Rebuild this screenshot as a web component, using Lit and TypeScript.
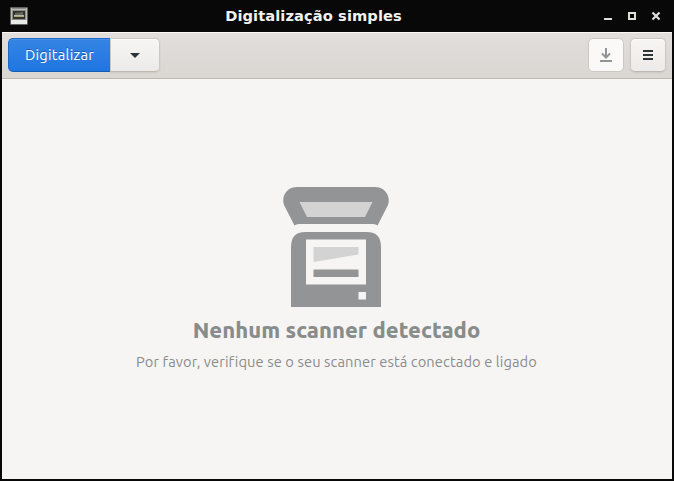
import { LitElement, html, css } from "lit";
import { customElement, property } from "lit/decorators.js";

@customElement("title-bar")
class TitleBar extends LitElement {
  @property() heading = "";

  static styles = css`
    :host {
      display: grid;
      grid-template-columns: 80px 1fr 80px;
      align-items: center;
      height: 32px;
      box-sizing: border-box;
      background: #080808;
      color: #f2f2f0;
    }
    .app-icon { display: block; margin-left: 10px; }
    .heading {
      padding-right: 47px;
      text-align: center;
      font: bold 14.67px/32px "DejaVu Sans", sans-serif;
      letter-spacing: 0.08px;
      white-space: nowrap;
    }
    .controls { display: block; margin-left: 6px; }
  `;

  render() {
    return html`
      <svg class="app-icon" width="18" height="18" viewBox="0 0 18 18">
        <rect x="0" y="0" width="18" height="18" rx="1" fill="#62625e" />
        <rect x="1" y="1" width="16" height="16" fill="#bcbcb9" />
        <rect x="2" y="1" width="14" height="1" fill="#8c8c88" />
        <rect x="2" y="3" width="14" height="10" fill="#8b8b87" />
        <path d="M3 4h12v8H3z" fill="#33332f" />
        <path d="M5 6L13 5V8H5z" fill="#66665f" />
        <rect x="4" y="8" width="10" height="1" fill="#b9b9a6" />
        <rect x="4" y="9" width="10" height="1" fill="#aaa46e" />
        <rect x="1" y="13" width="16" height="4" fill="#e9e9e7" />
      </svg>
      <div class="heading">${this.heading}</div>
      <svg class="controls" width="64" height="32" viewBox="0 0 64 32">
        <path d="M4 18h8v2H4z" fill="#deded9" />
        <path d="M29 13h6v6h-6z" fill="none" stroke="#deded9" stroke-width="2" />
        <path d="M52.5 12.5l7 7M59.5 12.5l-7 7" stroke="#deded9" stroke-width="2.2" />
      </svg>
    `;
  }
}

@customElement("header-bar")
class HeaderBar extends LitElement {
  static styles = css`
    :host {
      display: flex;
      justify-content: space-between;
      height: 47px;
      box-sizing: border-box;
      padding: 6px;
      border-bottom: 1px solid #bfb8b1;
      box-shadow: inset 0 1px #f9f8f7;
      background: linear-gradient(#e1dedb, #dad6d2);
    }
    .group { display: flex; }
    .tools { display: flex; gap: 6px; }
    button {
      display: flex;
      align-items: center;
      justify-content: center;
      box-sizing: border-box;
      height: 34px;
      margin: 0;
      padding: 0;
      border: 1px solid #cdc7c2;
      border-bottom-color: #bfb8b1;
      border-radius: 5px;
      background: linear-gradient(#f6f5f3, #edebe9);
      box-shadow: 0 1px 2px rgba(0, 0, 0, 0.07), inset 0 1px #fdfdfc;
    }
    svg { display: block; }
    .scan {
      width: 102px;
      border-color: #1b6acb;
      border-bottom-color: #185fb4;
      border-right: 0;
      border-radius: 5px 0 0 5px;
      background: linear-gradient(#3584e4, #1f76e1);
      box-shadow: inset 0 1px #4990e7;
      color: #fff;
      font: 14.67px/20px Ubuntu, "Noto Sans", sans-serif;
      letter-spacing: 0.25px;
      text-shadow: 0 -1px rgba(0, 0, 0, 0.3);
    }
    .more { width: 50px; border-left: 1px solid #cdc7c2; border-radius: 0 5px 5px 0; }
    .tool { width: 36px; }
    .tool.disabled { background: #faf9f8; box-shadow: none; border-bottom-color: #cdc7c2; }
  `;

  render() {
    return html`
      <div class="group">
        <button class="scan">Digitalizar</button>
        <button class="more" aria-label="Opções">
          <svg width="16" height="16" viewBox="0 0 16 16">
            <path d="M3 6h10L8 11z" fill="#2e3436" />
          </svg>
        </button>
      </div>
      <div class="tools">
        <button class="tool disabled" aria-label="Salvar">
          <svg width="16" height="16" viewBox="0 0 16 16">
            <path d="M8 1v9M4 6.500L8 10.500L12 6.500" fill="none" stroke="#929595" stroke-width="2" />
            <path d="M2 13h12v2H2z" fill="#929595" />
          </svg>
        </button>
        <button class="tool" aria-label="Menu">
          <svg width="16" height="16" viewBox="0 0 16 16">
            <path d="M3 3h10v2H3zM3 7h10v2H3zM3 11h10v2H3z" fill="#2e3436" />
          </svg>
        </button>
      </div>
    `;
  }
}

@customElement("empty-status")
class EmptyStatus extends LitElement {
  @property() heading = "";
  @property() detail = "";

  static styles = css`
    :host {
      display: flex;
      flex-direction: column;
      align-items: center;
      box-sizing: border-box;
      padding: 108px 2px 0 0;
      background: #f6f5f4;
      color: #888d8b;
      font-family: Ubuntu, "Noto Sans", sans-serif;
      font-variant-ligatures: none;
      white-space: nowrap;
    }
    .scanner { display: block; }
    .heading {
      margin: 8px 0 0 1px;
      font-size: 22px;
      font-weight: 800;
      line-height: 30px;
      letter-spacing: 0.04px;
    }
    .detail {
      margin: 7px 0 0 1px;
      font-size: 14.67px;
      line-height: 20px;
      letter-spacing: 0.1px;
    }
  `;

  render() {
    return html`
      <svg class="scanner" width="106" height="120" viewBox="0 0 106 120">
        <path
          d="M14 0H92C102 0 108 9 105 18L94.500 38.500Q93 37 90 37H16Q13 37 11.500 38.500L1 18C-2 9 4 0 14 0z"
          fill="#929495"
        />
        <path d="M16.500 15H89.500L82 30H24z" fill="#d3d3d3" />
        <path d="M8 120V60Q8 45 22 45H84Q98 45 98 60V120z" fill="#929495" />
        <path d="M23 52.500H83V97.500H23z" fill="#f6f5f4" />
        <path d="M30.500 60H75.500V67.500L30.500 75z" fill="#d3d3d3" />
        <path d="M30.500 82.500h45v7.500h-45z" fill="#929495" />
        <path d="M75.500 105H83v7.500h-7.500z" fill="#f6f5f4" />
      </svg>
      <div class="heading">${this.heading}</div>
      <div class="detail">${this.detail}</div>
    `;
  }
}

@customElement("app-root")
class AppRoot extends LitElement {
  static styles = css`
    :host {
      display: flex;
      flex-direction: column;
      width: 674px;
      height: 481px;
      background: #080808;
      overflow: hidden;
    }
    .window {
      flex: 1;
      display: flex;
      flex-direction: column;
      margin: 0 2px 2px;
    }
    .status { flex: 1; }
  `;

  render() {
    return html`
      <title-bar heading="Digitalização simples"></title-bar>
      <div class="window">
        <header-bar></header-bar>
        <empty-status
          class="status"
          heading="Nenhum scanner detectado"
          detail="Por favor, verifique se o seu scanner está conectado e ligado"
        ></empty-status>
      </div>
    `;
  }
}
